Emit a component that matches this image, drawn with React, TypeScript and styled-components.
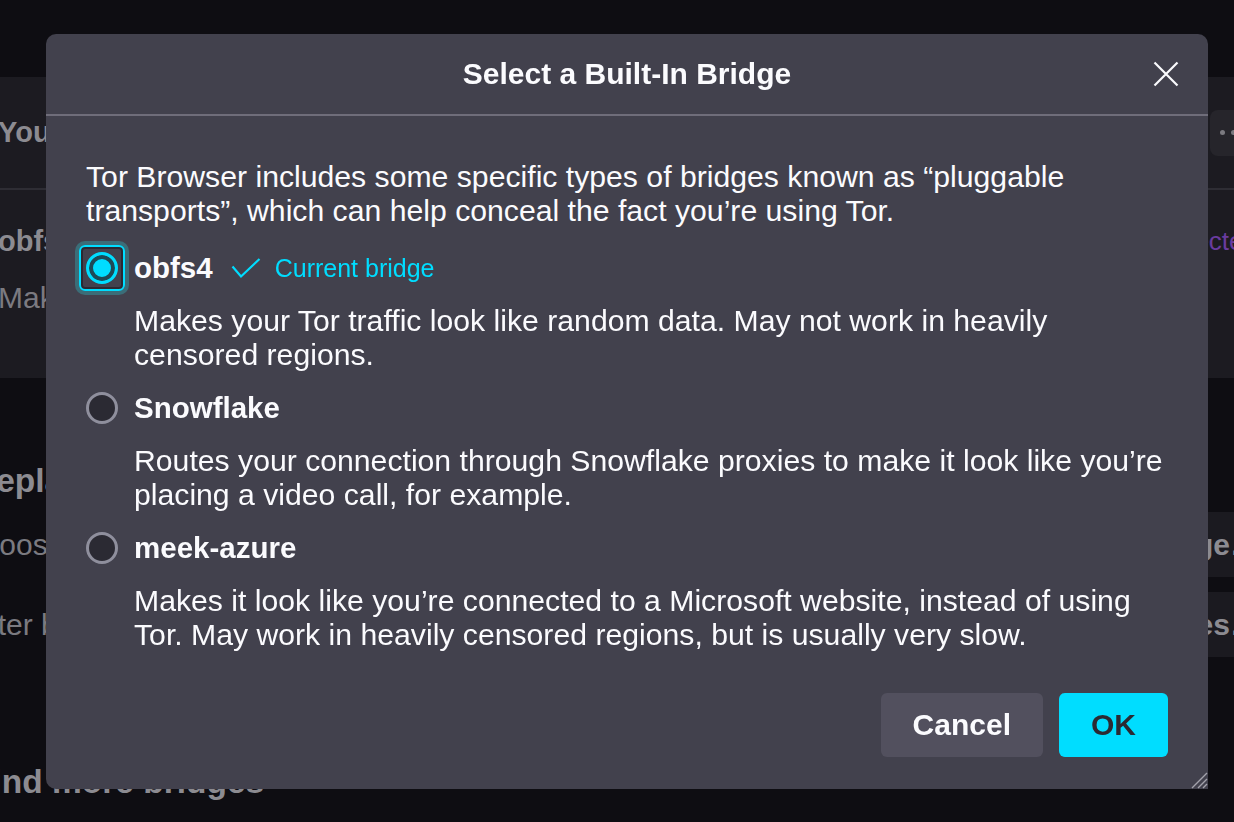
import React from 'react';
import styled, { createGlobalStyle } from 'styled-components';

const GlobalStyle = createGlobalStyle`
  html, body {
    margin: 0;
    padding: 0;
    background: #0e0d12;
    font-family: "Liberation Sans", Arial, sans-serif;
    overflow: hidden;
  }
  * { box-sizing: border-box; }
`;

/* ---------- dimmed preferences page behind the dialog ---------- */

const Page = styled.div`
  width: 1234px;
  height: 822px;
  padding-top: 77px;
  overflow: hidden;
  color: #8c8b91;
`;

const Card = styled.section`
  width: 1294px;
  margin-left: -20px;
  background: #1c1b21;
  border-radius: 8px;
  padding-bottom: 63px;
`;

const CardHeader = styled.div`
  height: 113px;
  display: flex;
  align-items: center;
  justify-content: space-between;
  padding: 0 18px;
  border-bottom: 2px solid #2e2d34;
  font-size: 29px;
  font-weight: 700;
`;

const MoreButton = styled.div`
  width: 46px;
  height: 46px;
  border-radius: 8px;
  background: #26252b;
  display: flex;
  align-items: center;
  justify-content: center;
  gap: 6px;

  span {
    width: 5px;
    height: 5px;
    border-radius: 50%;
    background: #7b7a80;
  }
`;

const BridgeRow = styled.div`
  display: flex;
  justify-content: space-between;
  padding: 34px 18px 0;
`;

const BridgeName = styled.div`
  font-size: 29px;
  font-weight: 700;
  line-height: 34px;
`;

const BridgeInfo = styled.div`
  font-size: 30px;
  line-height: 34px;
  margin-top: 23px;
  color: #7b7a80;
`;

const Connected = styled.div`
  font-size: 26px;
  line-height: 34px;
  color: #6a3b9f;
  margin-right: -2px;
`;

const SectionBlock = styled.section`
  margin-left: -46px;
  width: 1314px;
  padding: 83px 18px 0;
`;

const SectionTitle = styled.h2`
  margin: 0;
  font-size: 33.5px;
  line-height: 40px;
  font-weight: 700;
`;

const OptionRow = styled.div`
  display: flex;
  align-items: center;
  justify-content: space-between;
  height: 65px;
  margin-top: 11px;
  margin-left: -11px;
  font-size: 30px;
  color: #7b7a80;

  & + & {
    margin-top: 15px;
  }
`;

const GhostButton = styled.div`
  height: 65px;
  padding: 0 30px;
  border-radius: 8px;
  background: #1b1a20;
  display: flex;
  align-items: center;
  font-weight: 700;
  color: #8c8b91;
  margin-right: -40px;
`;

const FindMore = styled(SectionTitle)`
  margin-top: 105px;
`;

/* ---------- dialog ---------- */

const Dialog = styled.div`
  position: fixed;
  top: 34px;
  left: 46px;
  width: 1162px;
  background: #42414d;
  border-radius: 10px 10px 0 10px;
  color: #fbfbfe;
  display: flex;
  flex-direction: column;
`;

const Header = styled.header`
  position: relative;
  height: 82px;
  border-bottom: 2px solid #6f6d7a;
  display: flex;
  align-items: center;
  justify-content: center;
`;

const Title = styled.h1`
  margin: 0;
  font-size: 30px;
  font-weight: 700;
`;

const CloseButton = styled.button`
  position: absolute;
  right: 28px;
  top: 26px;
  width: 28px;
  height: 28px;
  padding: 0;
  border: 0;
  background: none;
  display: flex;
  align-items: center;
  justify-content: center;
`;

const Body = styled.div`
  padding: 44px 40px 0;
`;

const Intro = styled.p`
  margin: 0 0 23px;
  font-size: 30.2px;
  line-height: 34px;
`;

const Options = styled.div`
  display: flex;
  flex-direction: column;
  gap: 19px;
`;

const Option = styled.div`
  display: flex;
  flex-direction: column;
  gap: 19px;
`;

const LabelRow = styled.div`
  display: flex;
  align-items: center;
  height: 34px;
`;

const Radio = styled.span<{ $checked?: boolean }>`
  position: relative;
  flex: none;
  width: 32px;
  height: 32px;
  border-radius: 50%;
  border: 3px solid ${(p) => (p.$checked ? '#00ddff' : '#8f8f9d')};
  background: ${(p) => (p.$checked ? '#00ddff' : '#2b2a33')};
  box-shadow: ${(p) => (p.$checked ? 'inset 0 0 0 4px #1d4a57' : 'none')};
  margin-right: 16px;

  ${(p) =>
    p.$checked &&
    `
    &::after {
      content: '';
      position: absolute;
      inset: -10px;
      border: 2px solid #00ddff;
      border-radius: 6px;
      box-shadow: 0 0 0 4px #3b6d78, inset 0 0 0 2px #2b2a33;
    }
  `}
`;

const Name = styled.span`
  font-size: 29.5px;
  font-weight: 700;
`;

const CurrentTag = styled.span`
  display: flex;
  align-items: center;
  gap: 14px;
  margin-left: 18px;
  font-size: 25px;
  color: #00ddff;
`;

const Description = styled.p`
  margin: 0;
  padding-left: 48px;
  font-size: 30.2px;
  line-height: 34px;
`;

const Footer = styled.footer`
  display: flex;
  justify-content: flex-end;
  gap: 16px;
  padding: 41px 40px 32px;
`;

const Button = styled.button<{ $primary?: boolean }>`
  height: 64px;
  padding: 0 32px;
  border: 0;
  border-radius: 6px;
  font-family: inherit;
  font-size: 30px;
  font-weight: 700;
  background: ${(p) => (p.$primary ? '#00ddff' : '#52505e')};
  color: ${(p) => (p.$primary ? '#2b2a33' : '#fbfbfe')};
`;

const Resizer = styled.svg`
  position: absolute;
  right: 0;
  bottom: 0;
`;

const bridges = [
  {
    name: 'obfs4',
    current: true,
    text: 'Makes your Tor traffic look like random data. May not work in heavily censored regions.',
  },
  {
    name: 'Snowflake',
    current: false,
    text: 'Routes your connection through Snowflake proxies to make it look like you’re placing a video call, for example.',
  },
  {
    name: 'meek-azure',
    current: false,
    text: 'Makes it look like you’re connected to a Microsoft website, instead of using Tor. May work in heavily censored regions, but is usually very slow.',
  },
];

export default function App() {
  return (
    <>
      <GlobalStyle />
      <Page>
        <Card>
          <CardHeader>
            <span>Your Current Bridges</span>
            <MoreButton>
              <span />
              <span />
              <span />
            </MoreButton>
          </CardHeader>
          <BridgeRow>
            <div>
              <BridgeName>obfs4</BridgeName>
              <BridgeInfo>Makes your Tor traffic look like random data.</BridgeInfo>
            </div>
            <Connected>Connected</Connected>
          </BridgeRow>
        </Card>
        <SectionBlock>
          <SectionTitle>Replace Your Bridges</SectionTitle>
          <OptionRow>
            <span>Choose from one of Tor Browser’s built-in bridges</span>
            <GhostButton>Select a Built-In Bridge…</GhostButton>
          </OptionRow>
          <OptionRow>
            <span>Enter bridge addresses you already know</span>
            <GhostButton>Add New Bridges…</GhostButton>
          </OptionRow>
          <FindMore>Find more bridges</FindMore>
        </SectionBlock>
      </Page>

      <Dialog>
        <Header>
          <Title>Select a Built-In Bridge</Title>
          <CloseButton aria-label="Close">
            <svg width="26" height="26" viewBox="0 0 26 26">
              <path d="M1.5 1.5 L24.5 24.5 M24.5 1.5 L1.5 24.5" stroke="#fbfbfe" strokeWidth="2.2" fill="none" />
            </svg>
          </CloseButton>
        </Header>
        <Body>
          <Intro>
            Tor Browser includes some specific types of bridges known as “pluggable transports”, which can help
            conceal the fact you’re using Tor.
          </Intro>
          <Options>
            {bridges.map((b) => (
              <Option key={b.name}>
                <LabelRow>
                  <Radio $checked={b.current} />
                  <Name>{b.name}</Name>
                  {b.current && (
                    <CurrentTag>
                      <svg width="30" height="22" viewBox="0 0 30 22">
                        <path d="M1.5 9.5 L10 19.5 L28.5 2" stroke="#00ddff" strokeWidth="2.2" fill="none" />
                      </svg>
                      Current bridge
                    </CurrentTag>
                  )}
                </LabelRow>
                <Description>{b.text}</Description>
              </Option>
            ))}
          </Options>
        </Body>
        <Footer>
          <Button>Cancel</Button>
          <Button $primary>OK</Button>
        </Footer>
        <Resizer width="22" height="22" viewBox="0 0 22 22">
          <path d="M21 6 L6 21 M21 12 L12 21 M21 17 L17 21" stroke="#a3a2ab" strokeWidth="1.4" fill="none" />
        </Resizer>
      </Dialog>
    </>
  );
}
